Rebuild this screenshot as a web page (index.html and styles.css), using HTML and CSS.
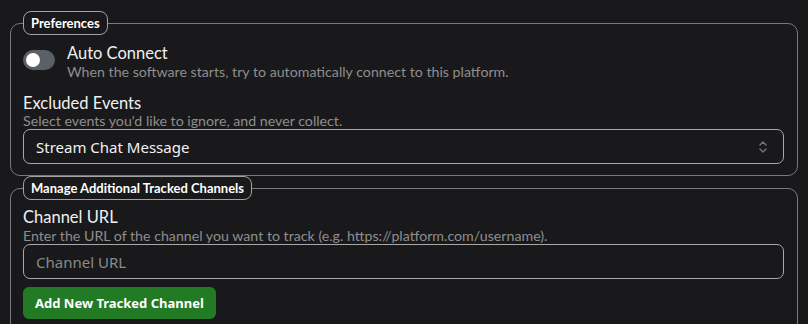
FILE: index.html
```html
<!DOCTYPE html>
<html>
<head>
<meta charset="utf-8">
<link rel="stylesheet" href="styles.css">
</head>
<body>
<fieldset class="group">
  <legend class="legend">Preferences</legend>
  <div class="toggle-row">
    <span class="toggle"><span class="knob"></span></span>
    <div class="toggle-text">
      <div class="label">Auto Connect</div>
      <div class="desc">When the software starts, try to automatically connect to this platform.</div>
    </div>
  </div>
  <div class="field field-events">
    <div class="label">Excluded Events</div>
    <div class="desc">Select events you'd like to ignore, and never collect.</div>
    <div class="select">
      <span class="select-text">Stream Chat Message</span>
      <svg class="chev" width="12" height="16" viewBox="0 0 12 16"><path d="M3 6 L6 3 L9 6" fill="none" stroke="#6b7280" stroke-width="1.5" stroke-linecap="round" stroke-linejoin="round"/><path d="M3 10 L6 13 L9 10" fill="none" stroke="#6b7280" stroke-width="1.5" stroke-linecap="round" stroke-linejoin="round"/></svg>
    </div>
  </div>
</fieldset>
<fieldset class="group group2">
  <legend class="legend">Manage Additional Tracked Channels</legend>
  <div class="field">
    <div class="label">Channel URL</div>
    <div class="desc">Enter the URL of the channel you want to track (e.g. https://platform.com/username).</div>
    <div class="input"><span class="placeholder">Channel URL</span></div>
  </div>
  <button class="btn">Add New Tracked Channel</button>
</fieldset>
</body>
</html>
```
FILE: styles.css
```css
html, body { margin: 0; padding: 0; }
body {
  background: #19191b;
  color: #ececec;
  font-family: Lato, "Noto Sans", sans-serif;
  padding: 0 10px;
  height: 324px;
  overflow: hidden;
}
.group {
  margin: 11px 0 0 0;
  border: 1px solid #7a7a7a;
  border-radius: 10px;
  padding: 8px 13px 11px 12px;
  min-width: 0;
}
.group2 { margin-top: 0; padding-top: 7px; padding-bottom: 20px; }
.legend {
  border: 1px solid #a3a3a3;
  border-radius: 8px;
  padding: 0 7px;
  height: 22px;
  line-height: 22px;
  font-size: 13px;
  font-weight: 700;
  color: #ffffff;
  margin-left: 0;
}
.toggle-row { display: flex; align-items: flex-start; gap: 12px; }
.toggle {
  margin-top: 7px;
  width: 32px; height: 20px;
  border-radius: 10px;
  background: #5b5f66;
  display: flex; align-items: center;
  padding-left: 3px; box-sizing: border-box;
}
.knob { width: 14px; height: 14px; border-radius: 50%; background: #fff; }
.label { font-size: 16.5px; line-height: 20px; color: #f0f0f0; }
.desc { font-size: 14.2px; line-height: 17px; color: #8e8e8e; }
.field { margin-top: 0; }
.field-events { margin-top: 13px; }
.field-events .desc { line-height: 16px; }
.select, .input {
  height: 35px;
  box-sizing: border-box;
  border: 1px solid #a8a8a8;
  border-radius: 7px;
  display: flex; align-items: center; justify-content: space-between;
  padding: 0 14px 0 12px;
}
.select-text { font-family: "Noto Sans", sans-serif; font-size: 15px; color: #f2f2f2; }
.placeholder { font-family: "Noto Sans", sans-serif; font-size: 15px; color: #8a8a8a; }
.chev { display: block; }
.btn {
  margin-top: 8px;
  background: #227a24;
  border: none;
  border-radius: 6px;
  color: #fff;
  font-family: "Noto Sans", sans-serif;
  font-weight: 700;
  font-size: 13px;
  height: 32px;
  padding: 0 12px;
}
```
